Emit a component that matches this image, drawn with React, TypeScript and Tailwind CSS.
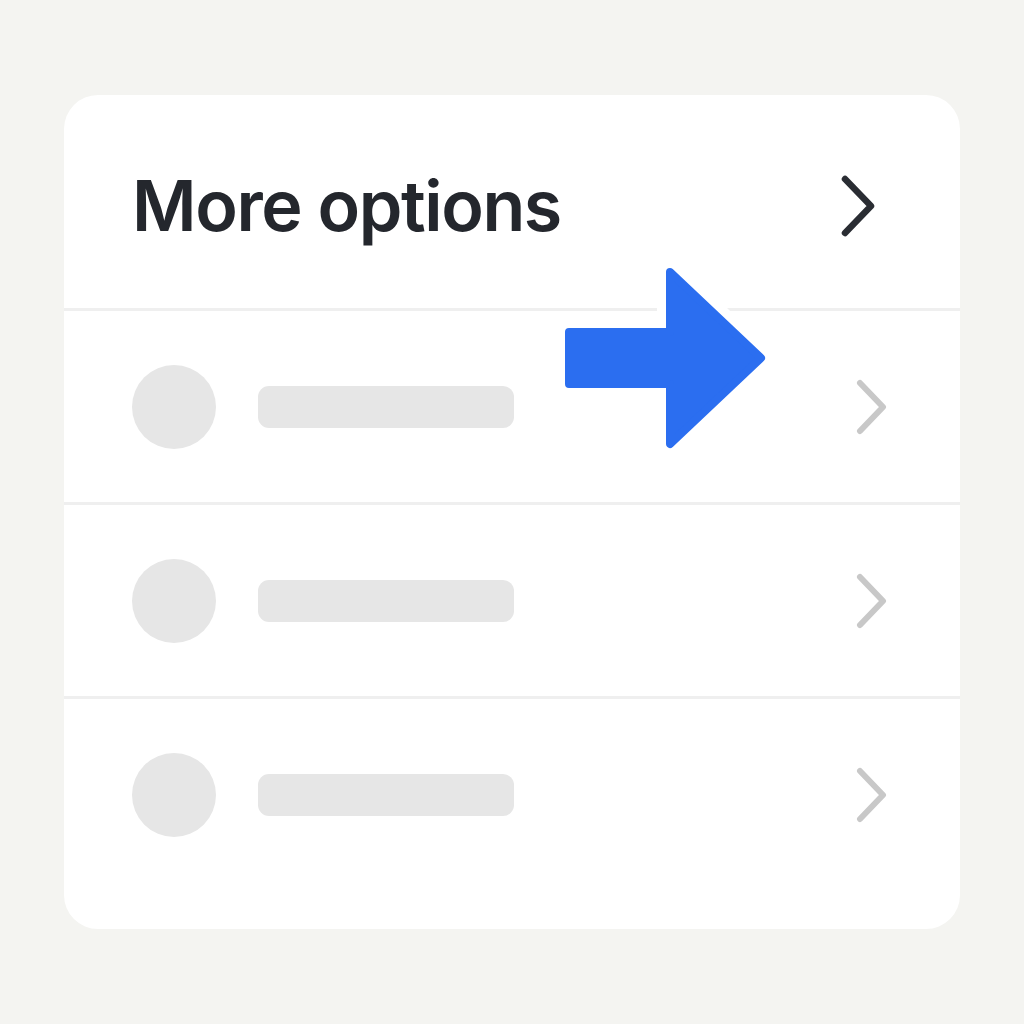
import type { FC } from 'react';

const Chevron: FC<{ dark?: boolean }> = ({ dark }) =>
  dark ? (
    <svg width="40" height="66" viewBox="0 0 40 66" fill="none">
      <path d="M7 6 L33 33 L7 60" stroke="#2a2d33" strokeWidth="6.5" strokeLinecap="round" strokeLinejoin="round" />
    </svg>
  ) : (
    <svg width="36" height="56" viewBox="0 0 36 56" fill="none">
      <path d="M6 4 L29 28 L6 52" stroke="#c8c8c8" strokeWidth="6" strokeLinecap="round" strokeLinejoin="round" />
    </svg>
  );

const arrowPoints = '24,85 125,85 125,25 216,111 125,197 125,137 24,137';

const BlueArrow: FC = () => (
  <svg width="240" height="222" viewBox="0 0 240 222" fill="none">
    <polygon points={arrowPoints} fill="#ffffff" stroke="#ffffff" strokeWidth="26" strokeLinejoin="round" />
    <polygon points={arrowPoints} fill="#2b6ef0" stroke="#2b6ef0" strokeWidth="8" strokeLinejoin="round" />
  </svg>
);

const Row: FC = () => (
  <div className="h-[194px] flex items-center pl-[68px] pr-[70px] border-t-[3px] border-[#efefef]">
    <div className="w-[84px] h-[84px] rounded-full bg-[#e6e6e6]" />
    <div className="ml-[42px] w-[256px] h-[42px] rounded-[11px] bg-[#e6e6e6]" />
    <div className="ml-auto flex items-center">
      <Chevron />
    </div>
  </div>
);

export default function App() {
  return (
    <div className="w-[1024px] h-[1024px] bg-[#f4f4f1] pt-[95px] px-[64px]" style={{ fontFamily: 'Inter, "Liberation Sans", sans-serif' }}>
      <div className="relative w-[896px] h-[834px] bg-white rounded-[34px] overflow-hidden">
        <div className="h-[213px] flex items-center pt-[8px] pl-[68px] pr-[82px]">
          <h1 className="text-[70px] font-semibold text-[#24272d] tracking-[-1.4px] leading-none">More options</h1>
          <div className="ml-auto">
            <Chevron dark />
          </div>
        </div>
        <Row />
        <Row />
        <Row />
        <div className="absolute left-[481px] top-[152px]">
          <BlueArrow />
        </div>
      </div>
    </div>
  );
}
